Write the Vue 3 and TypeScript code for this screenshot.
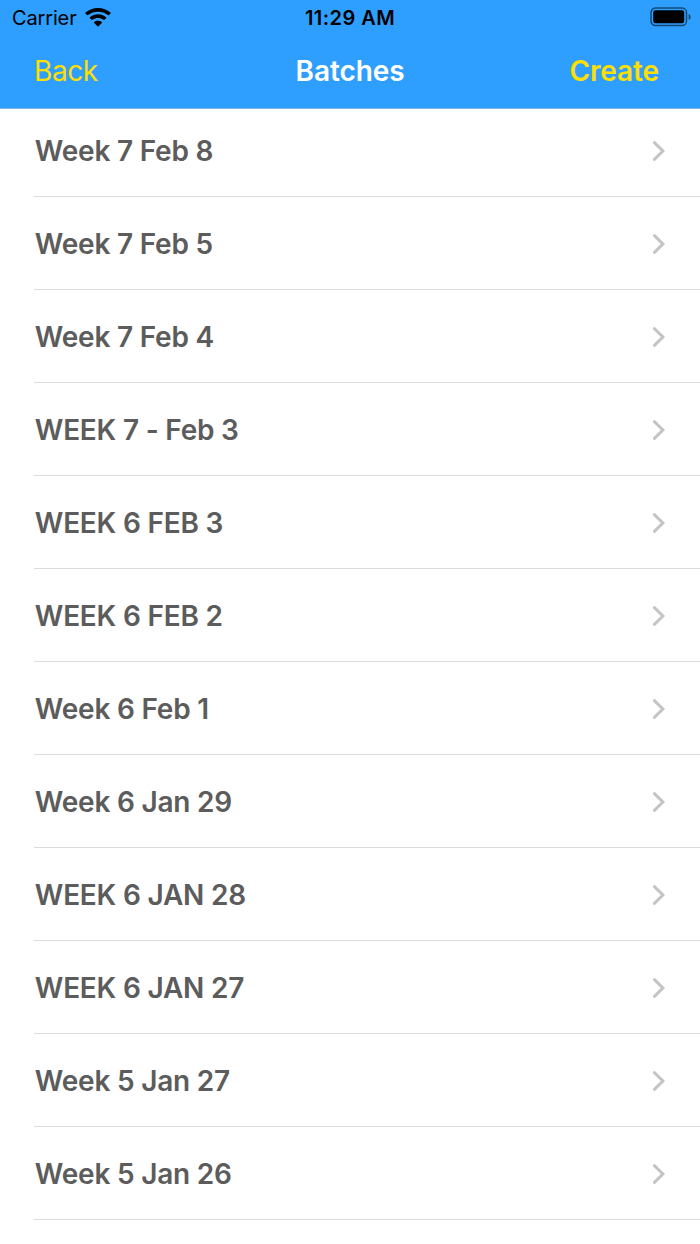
<script setup lang="ts">
const batches: string[] = [
  'Week 7 Feb 8',
  'Week 7 Feb 5',
  'Week 7 Feb 4',
  'WEEK 7 - Feb 3',
  'WEEK 6 FEB 3',
  'WEEK 6 FEB 2',
  'Week 6 Feb 1',
  'Week 6 Jan 29',
  'WEEK 6 JAN 28',
  'WEEK 6 JAN 27',
  'Week 5 Jan 27',
  'Week 5 Jan 26',
]
</script>

<template>
  <div class="screen">
    <header class="top">
      <div class="status">
        <div class="carrier">
          <span class="carrier-name">Carrier</span>
          <svg class="wifi" width="26" height="19" viewBox="0 0 26 19">
            <path d="M13 0C8.200 0 3.900 1.700.5 4.600q-.5.5 0 1L2 7.100q.5.400 1 0C5.800 4.800 9.200 3.700 13 3.700s7.200 1.100 10 3.400q.5.400 1 0l1.500-1.500q.5-.5 0-1C22.100 1.700 17.800 0 13 0z" />
            <path d="M13 6.300c-3.100 0-5.900 1.100-8.100 3q-.5.5 0 1l1.700 1.500q.5.400 1 0C9.100 10.500 11 9.900 13 9.900s3.900.6 5.400 1.900q.5.400 1 0l1.700-1.500q.5-.5 0-1c-2.200-1.900-5-3-8.100-3z" />
            <path d="M13 12.700c-1.500 0-2.800.5-3.800 1.300q-.5.5 0 1l3.300 3.200q.5.400 1 0l3.300-3.200q.5-.5 0-1c-1-.8-2.300-1.300-3.800-1.300z" />
          </svg>
        </div>
        <span class="time">11:29 AM</span>
        <svg class="battery" width="42" height="20" viewBox="0 0 42 20">
          <rect x="1" y="1" width="35.500" height="17.600" rx="4.500" fill="none" stroke="#000" stroke-opacity=".55" stroke-width="1.500" />
          <rect x="3.200" y="3.300" width="31" height="13" rx="2.200" />
          <path d="M38.700 7v6c1.200-.5 2-1.700 2-3s-.8-2.500-2-3z" fill-opacity=".55" />
        </svg>
      </div>
      <nav class="bar">
        <span class="back">Back</span>
        <span class="title">Batches</span>
        <span class="create">Create</span>
      </nav>
    </header>
    <ul class="list">
      <li v-for="name in batches" :key="name" class="row">
        <span class="name">{{ name }}</span>
        <svg class="chevron" width="16" height="22" viewBox="0 0 16 22">
          <path d="M3.400 2.600 11.900 11 3.400 19.400" fill="none" stroke="#c4c4c6" stroke-width="3" stroke-linecap="round" stroke-linejoin="miter" />
        </svg>
      </li>
    </ul>
  </div>
</template>

<style>
body {
  margin: 0;
  background: #fff;
}
</style>

<style scoped>
.screen {
  width: 700px;
  height: 1244px;
  overflow: hidden;
  background: #fff;
  font-family: Inter, "Liberation Sans", sans-serif;
}
.top {
  box-sizing: border-box;
  height: 109px;
  background: #2e9eff;
  border-bottom: 1px solid #83b3df;
}
.status,
.bar {
  display: grid;
  grid-template-columns: 1fr auto 1fr;
  align-items: center;
}
.status {
  height: 36px;
  padding: 0 8px 0 12px;
  font-size: 20px;
  color: #000;
}
.carrier {
  display: flex;
  align-items: center;
  gap: 8px;
}
.carrier-name {
  letter-spacing: -0.15px;
}
.wifi {
  margin-top: -2px;
}
.time {
  margin: 0 4px 0 0;
  font-weight: 600;
  letter-spacing: 0.45px;
}
.battery {
  justify-self: end;
  margin-top: -2px;
}
.bar {
  height: 70px;
  padding: 0 35px;
  font-size: 28px;
}
.back {
  margin-left: -1px;
  color: #ffdf00;
  letter-spacing: -0.4px;
}
.title {
  color: #fff;
  font-weight: 600;
  letter-spacing: -0.1px;
}
.create {
  justify-self: end;
  margin-right: 6px;
  color: #ffdf00;
  font-weight: 600;
  letter-spacing: -0.1px;
}
.list {
  margin: 0;
  padding: 0 0 0 34px;
  list-style: none;
}
.row {
  box-sizing: border-box;
  height: 93px;
  display: flex;
  align-items: center;
  justify-content: space-between;
  padding: 2px 33.500px 0 0.8px;
  border-bottom: 1px solid #dcdcdd;
}
.row:first-child {
  height: 88px;
  padding-top: 0;
  padding-bottom: 3px;
}
.name {
  font-size: 28px;
  font-weight: 600;
  letter-spacing: -0.22px;
  color: #5c5c5c;
}
</style>
